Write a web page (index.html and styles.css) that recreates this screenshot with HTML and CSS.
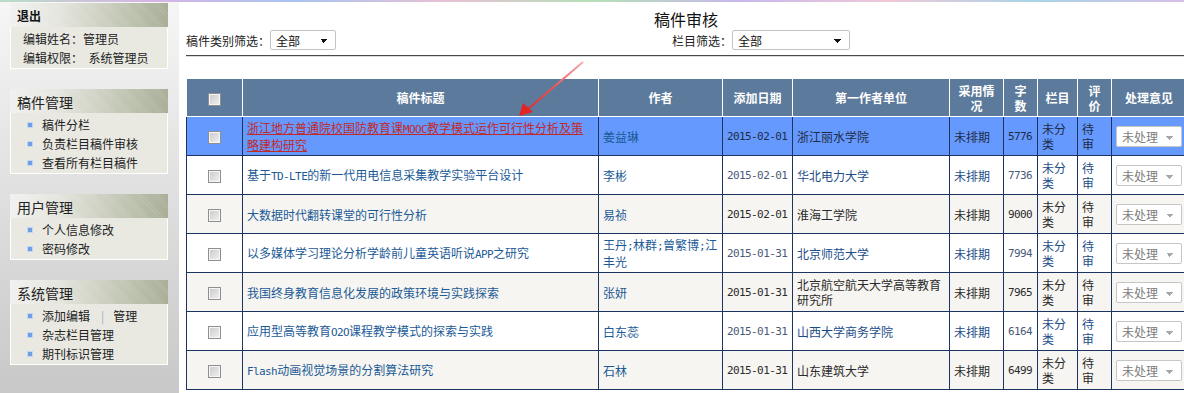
FILE: index.html
```html
<!DOCTYPE html>
<html lang="zh-CN">
<head>
    <meta charset="UTF-8">
    <title>稿件审核</title>
    <link rel="stylesheet" href="styles.css">
</head>
<body>
    <div class="top-band"></div>
    <div class="wrap">
        <div class="sidebar">
            <div class="box">
                <div class="box-head exit">退出</div>
                <div class="box-body info">
                    <div>编辑姓名：管理员</div>
                    <div>编辑权限：&nbsp; 系统管理员</div>
                </div>
            </div>
            <div class="box">
                <div class="box-head">稿件管理</div>
                <ul class="box-body">
                    <li><span class="dot"></span>稿件分栏</li>
                    <li><span class="dot"></span>负责栏目稿件审核</li>
                    <li><span class="dot"></span>查看所有栏目稿件</li>
                </ul>
            </div>
            <div class="box">
                <div class="box-head">用户管理</div>
                <ul class="box-body">
                    <li><span class="dot"></span>个人信息修改</li>
                    <li><span class="dot"></span>密码修改</li>
                </ul>
            </div>
            <div class="box">
                <div class="box-head">系统管理</div>
                <ul class="box-body">
                    <li><span class="dot"></span>添加编辑<span class="sep">|</span>管理</li>
                    <li><span class="dot"></span>杂志栏目管理</li>
                    <li><span class="dot"></span>期刊标识管理</li>
                </ul>
            </div>
        </div>

        <div class="main">
            <div class="page-title">稿件审核</div>
            <div class="filters">
                <div class="filter">
                    <label>稿件类别筛选：</label>
                    <select class="filter-select short"><option>全部</option></select>
                </div>
                <div class="filter">
                    <label>栏目筛选：</label>
                    <select class="filter-select long"><option>全部</option></select>
                </div>
            </div>
            <div class="rule"></div>

            <table class="review">
                <colgroup>
                    <col class="c-check"><col class="c-title"><col class="c-author"><col class="c-date">
                    <col class="c-unit"><col class="c-use"><col class="c-words"><col class="c-column">
                    <col class="c-rate"><col class="c-action">
                </colgroup>
                <thead>
                    <tr>
                        <th><input type="checkbox"></th>
                        <th>稿件标题</th>
                        <th>作者</th>
                        <th>添加日期</th>
                        <th>第一作者单位</th>
                        <th>采用情况</th>
                        <th>字数</th>
                        <th>栏目</th>
                        <th>评价</th>
                        <th>处理意见</th>
                    </tr>
                </thead>
                <tbody>
                    <tr class="active">
                        <td class="center"><input type="checkbox"></td>
                        <td><a href="#" class="hover">浙江地方普通院校国防教育课<span class="en">MOOC</span>教学模式运作可行性分析及策略建构研究</a></td>
                        <td><a href="#">姜益琳</a></td>
                        <td class="en">2015-02-01</td>
                        <td>浙江丽水学院</td>
                        <td>未排期</td>
                        <td class="en">5776</td>
                        <td>未分类</td>
                        <td class="rate">待审</td>
                        <td><select class="deal"><option>未处理</option></select></td>
                    </tr>
                    <tr>
                        <td class="center"><input type="checkbox"></td>
                        <td><a href="#">基于<span class="en">TD-LTE</span>的新一代用电信息采集教学实验平台设计</a></td>
                        <td><a href="#">李彬</a></td>
                        <td class="en">2015-02-01</td>
                        <td>华北电力大学</td>
                        <td>未排期</td>
                        <td class="en">7736</td>
                        <td>未分类</td>
                        <td class="rate">待审</td>
                        <td><select class="deal"><option>未处理</option></select></td>
                    </tr>
                    <tr class="alt">
                        <td class="center"><input type="checkbox"></td>
                        <td><a href="#">大数据时代翻转课堂的可行性分析</a></td>
                        <td><a href="#">易祯</a></td>
                        <td class="en">2015-02-01</td>
                        <td>淮海工学院</td>
                        <td>未排期</td>
                        <td class="en">9000</td>
                        <td>未分类</td>
                        <td class="rate">待审</td>
                        <td><select class="deal"><option>未处理</option></select></td>
                    </tr>
                    <tr>
                        <td class="center"><input type="checkbox"></td>
                        <td><a href="#">以多媒体学习理论分析学龄前儿童英语听说<span class="en">APP</span>之研究</a></td>
                        <td><a href="#">王丹<span class="en">;</span>林群<span class="en">;</span>曾繁博<span class="en">;</span>江丰光</a></td>
                        <td class="en">2015-01-31</td>
                        <td>北京师范大学</td>
                        <td>未排期</td>
                        <td class="en">7994</td>
                        <td>未分类</td>
                        <td class="rate">待审</td>
                        <td><select class="deal"><option>未处理</option></select></td>
                    </tr>
                    <tr class="alt">
                        <td class="center"><input type="checkbox"></td>
                        <td><a href="#">我国终身教育信息化发展的政策环境与实践探索</a></td>
                        <td><a href="#">张妍</a></td>
                        <td class="en">2015-01-31</td>
                        <td>北京航空航天大学高等教育研究所</td>
                        <td>未排期</td>
                        <td class="en">7965</td>
                        <td>未分类</td>
                        <td class="rate">待审</td>
                        <td><select class="deal"><option>未处理</option></select></td>
                    </tr>
                    <tr>
                        <td class="center"><input type="checkbox"></td>
                        <td><a href="#">应用型高等教育<span class="en">O2O</span>课程教学模式的探索与实践</a></td>
                        <td><a href="#">白东蕊</a></td>
                        <td class="en">2015-01-31</td>
                        <td>山西大学商务学院</td>
                        <td>未排期</td>
                        <td class="en">6164</td>
                        <td>未分类</td>
                        <td class="rate">待审</td>
                        <td><select class="deal"><option>未处理</option></select></td>
                    </tr>
                    <tr class="alt">
                        <td class="center"><input type="checkbox"></td>
                        <td><a href="#"><span class="en">Flash</span>动画视觉场景的分割算法研究</a></td>
                        <td><a href="#">石林</a></td>
                        <td class="en">2015-01-31</td>
                        <td>山东建筑大学</td>
                        <td>未排期</td>
                        <td class="en">6499</td>
                        <td>未分类</td>
                        <td class="rate">待审</td>
                        <td><select class="deal"><option>未处理</option></select></td>
                    </tr>
                </tbody>
            </table>
        </div>
    </div>

    <!-- red annotation arrow drawn over the table -->
    <svg class="arrow" width="1184" height="393" viewBox="0 0 1184 393">
        <defs>
            <linearGradient id="arrowFade" x1="583" y1="62" x2="522" y2="114" gradientUnits="userSpaceOnUse">
                <stop offset="0" stop-color="#f4b0b0"/>
                <stop offset="0.5" stop-color="#ec5050"/>
                <stop offset="1" stop-color="#e42424"/>
            </linearGradient>
        </defs>
        <line x1="583" y1="62" x2="528" y2="109" stroke="url(#arrowFade)" stroke-width="2"/>
        <polygon points="519,116 523,103 533,112" fill="#e42424"/>
    </svg>
</body>
</html>
```

FILE: styles.css
```css
body {
    margin: 0;
    font-family: "Noto Sans CJK SC", sans-serif;
    font-size: 12px;
    color: #222;
    background-color: #fff;
    overflow: hidden;
    position: relative;
    height: 393px;
}
.top-band {
    height: 2px;
    background: linear-gradient(90deg, #b8dcc8, #d8b4e4, #a8c4f0, #e8c0d4, #b4e0b8, #c8b8ec, #f0c8d8, #a8d4e8, #d8c0e8);
}
.wrap {
    display: flex;
    height: 391px;
}
.sidebar {
    width: 169px;
    flex-shrink: 0;
    padding: 1px 0 0 10px;
    background: linear-gradient(#f6f6f6, #c8c8c8);
}
.box {
    width: 158px;
    margin-bottom: 20px;
}
.box-head {
    height: 24px;
    line-height: 26px;
    padding-left: 7px;
    font-size: 14px;
    color: #222;
    background-color: #a7ad96;
    background-image:
        repeating-linear-gradient(45deg, rgba(255,255,255,0.12) 0 1px, transparent 1px 2px),
        linear-gradient(90deg, #f0f0ee 0%, #e4e5de 30%, #c5c9b8 65%, #a6ac94 100%);
}
.box-head.exit {
    font-size: 12px;
    font-weight: bold;
    color: #111;
}
.box-body {
    list-style: none;
    margin: 0;
    padding: 2px 0 1px 0;
    background-color: #e9e9e2;
    border: 1px solid #fff;
    border-top: none;
}
.box-body li {
    height: 19px;
    line-height: 19px;
    padding-left: 16px;
    display: flex;
    align-items: center;
}
.box-body.info div {
    line-height: 19px;
    padding-left: 12px;
}
.dot {
    width: 4px;
    height: 4px;
    margin-right: 9px;
    background-color: #6f9fe2;
    border: 1px solid #c2d5f2;
}
.sep {
    color: #9fb0cc;
    margin: 0 9px 0 11px;
}

.main {
    flex: 1;
    padding-left: 7px;
    position: relative;
}
.page-title {
    padding-top: 7px;
    height: 20px;
    line-height: 20px;
    font-size: 16px;
    text-align: center;
    width: 1000px;
    color: #111;
}
.filters {
    display: grid;
    grid-template-columns: 486px auto;
    height: 22px;
    align-items: center;
}
.filter {
    display: flex;
    align-items: center;
}
.filter-select {
    appearance: none;
    height: 20px;
    font-family: "Noto Sans CJK SC", sans-serif;
    font-size: 12px;
    color: #111;
    padding: 0 0 0 5px;
    border: 1px solid #c4c4c4;
    border-radius: 2px;
    background-color: #fff;
    background-image: linear-gradient(45deg, transparent 50%, #111 50%), linear-gradient(135deg, #111 50%, transparent 50%);
    background-position: calc(100% - 11px) 8px, calc(100% - 7px) 8px;
    background-size: 4px 4px;
    background-repeat: no-repeat;
}
.filter-select.short { width: 66px; }
.filter-select.long { width: 118px; }
.rule {
    margin-top: 4px;
    border-top: 1px solid #4a4a4a;
    border-bottom: 1px solid #dcdcdc;
    width: 1000px;
    height: 0;
}

.review {
    margin-top: 22px;
    width: 1000px;
    table-layout: fixed;
    border-collapse: collapse;
}
.c-check { width: 56px; }
.c-title { width: 356px; }
.c-author { width: 124px; }
.c-date { width: 70px; }
.c-unit { width: 157px; }
.c-use { width: 54px; }
.c-words { width: 34px; }
.c-column { width: 40px; }
.c-rate { width: 34px; }
.c-action { width: 75px; }
.review th {
    height: 37px;
    background-color: #5c7a9b;
    color: #fff;
    font-weight: bold;
    line-height: 15px;
    padding: 0 5px;
    border: 1px solid #fff;
    border-top: none;
}
.review td {
    height: 38px;
    padding: 0 4px;
    line-height: 15px;
    border: 1px solid #1d3461;
    color: #1c4d88;
    background-color: #fff;
}
.review td.rate { padding-right: 6px; }
.review tr.alt td {
    background-color: #f6f5f1;
    color: #2a2a2a;
}
.review tr.active td {
    background-color: #6699fe;
    color: #1e2c48;
}
.review td.center { text-align: center; }
.review a {
    color: #1b5a96;
    text-decoration: none;
}
.review a.hover {
    color: #c02a2a;
    text-decoration: underline;
}
.en {
    font-family: "DejaVu Sans Mono", monospace;
    font-size: 11px;
    letter-spacing: -0.6px;
}
.review td.en { color: #3a3a4a; }
.review tr:not(.alt):not(.active) td.en { color: #4a5a78; }
input[type="checkbox"] {
    appearance: none;
    width: 13px;
    height: 13px;
    margin: 0;
    vertical-align: middle;
    border: 1px solid #8f8f8f;
    box-shadow: inset 0 0 0 1px #f6f6f6;
    background: linear-gradient(135deg, #c9c9c9, #f2f2f2);
}
.deal {
    appearance: none;
    width: 66px;
    height: 21px;
    font-family: "Noto Sans CJK SC", sans-serif;
    font-size: 12px;
    color: #7c7c7c;
    padding: 0 0 0 5px;
    border: 1px solid #c6c6c6;
    border-radius: 2px;
    background-color: #fff;
    background-image: linear-gradient(45deg, transparent 50%, #a8a8a8 50%), linear-gradient(135deg, #a8a8a8 50%, transparent 50%);
    background-position: calc(100% - 11px) 9px, calc(100% - 7px) 9px;
    background-size: 4px 4px;
    background-repeat: no-repeat;
}
.arrow {
    position: absolute;
    left: 0;
    top: 0;
    pointer-events: none;
}
```
